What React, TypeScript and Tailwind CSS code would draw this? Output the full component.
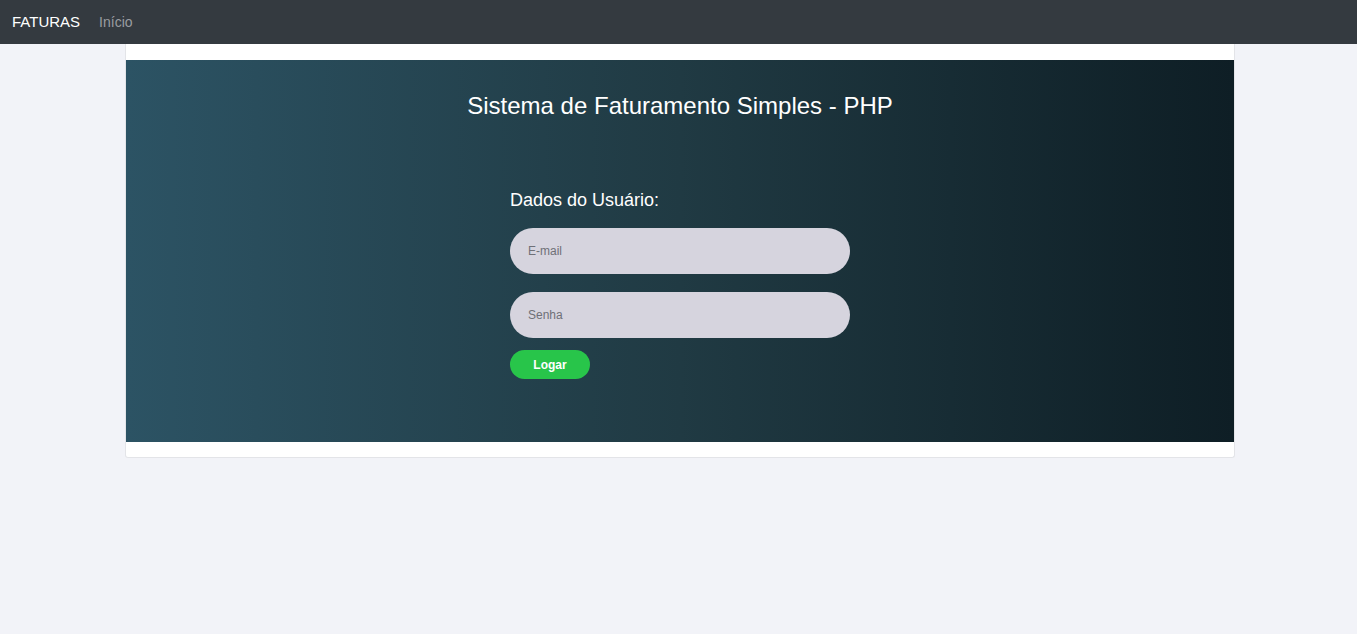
export default function App() {
  return (
    <div className="min-h-screen bg-[#f2f3f8]" style={{ fontFamily: '"Liberation Sans", Arial, sans-serif' }}>
      {/* Navbar */}
      <nav className="h-[44px] bg-[#343a40] flex items-center px-3">
        <span className="text-white text-[15px] mr-[19px]">FATURAS</span>
        <span className="text-[#9a9da1] text-[14px]">Início</span>
      </nav>

      {/* Card */}
      <div className="w-[1110px] ml-[125px] bg-white border border-[#e3e4e8] border-t-0 rounded-b-[3px] py-[16px] pb-[15px]">
        <div className="h-[382px] bg-gradient-to-r from-[#2c5364] via-[#203a43] to-[#0e1e25] flex flex-col items-center pt-[32px]">
          <h3 className="text-white text-[24px] leading-[28px] mb-[69px]">Sistema de Faturamento Simples - PHP</h3>

          <form className="w-[340px] flex flex-col" onSubmit={(e) => e.preventDefault()}>
            <label className="text-white text-[18px] leading-[22px] mb-[17px]">Dados do Usuário:</label>
            <input
              type="email"
              placeholder="E-mail"
              className="h-[46px] rounded-full bg-[#d6d4de] px-[18px] text-[12px] text-[#333] placeholder:text-[#6f7077] outline-none mb-[18px]"
            />
            <input
              type="password"
              placeholder="Senha"
              className="h-[46px] rounded-full bg-[#d6d4de] px-[18px] text-[12px] text-[#333] placeholder:text-[#6f7077] outline-none mb-[12px]"
            />
            <button
              type="submit"
              className="w-[80px] h-[29px] rounded-full bg-[#28c54a] text-white text-[12px] font-bold"
            >
              Logar
            </button>
          </form>
        </div>
      </div>
    </div>
  );
}
